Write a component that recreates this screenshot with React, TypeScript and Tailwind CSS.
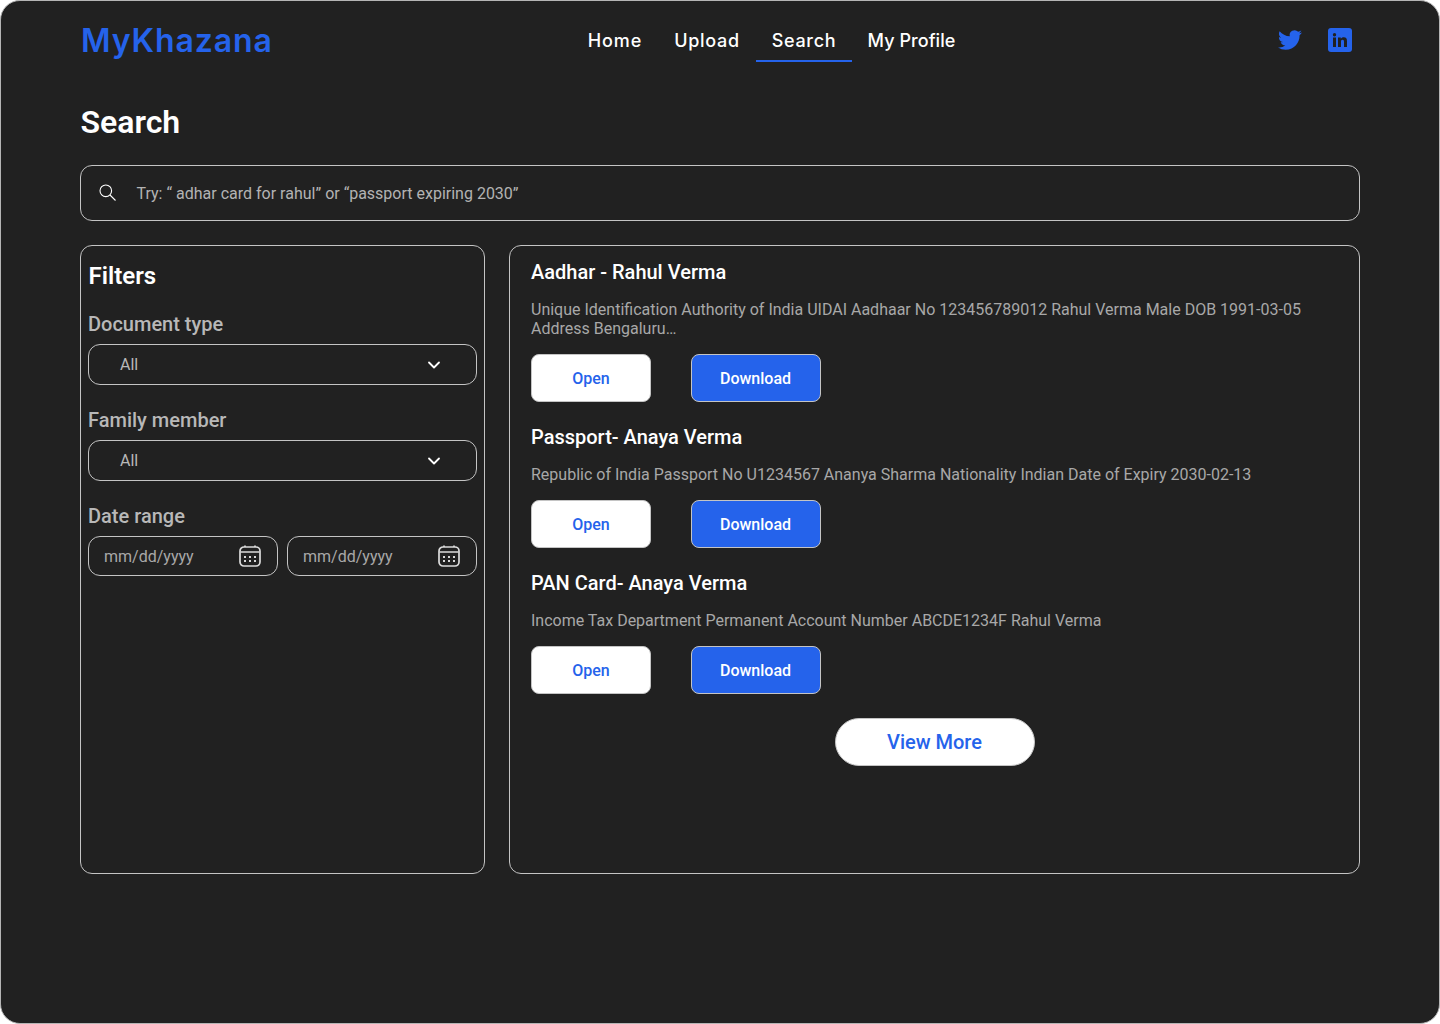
import { ChevronDown } from "lucide-react";

const results = [
  {
    title: "Aadhar - Rahul Verma",
    text: "Unique Identification Authority of India UIDAI Aadhaar No 123456789012 Rahul Verma Male DOB 1991-03-05 Address Bengaluru…",
  },
  {
    title: "Passport- Anaya Verma",
    text: "Republic of India Passport No U1234567 Ananya Sharma Nationality Indian Date of Expiry 2030-02-13",
  },
  {
    title: "PAN Card- Anaya Verma",
    text: "Income Tax Department Permanent Account Number ABCDE1234F Rahul Verma",
  },
];

function CalendarIcon() {
  return (
    <svg width="24" height="24" viewBox="0 0 24 24" fill="none" stroke="#dcdcdc" strokeWidth="1.7">
      <rect x="2" y="3" width="20" height="19" rx="4" />
      <path d="M2.500 8h19M7 1.500v1.500M17 1.500v1.500" />
      <path
        d="M6 12h2v2h-2zM11 12h2v2h-2zM16 12h2v2h-2zM6 16h2v2h-2zM11 16h2v2h-2zM16 16h2v2h-2z"
        fill="#d8d8d8"
        stroke="none"
      />
    </svg>
  );
}

function FilterSelect({ label }: { label: string }) {
  return (
    <div>
      <div className="text-[20px] leading-[24px] font-medium text-[#b8b8b8]">{label}</div>
      <div className="mt-2 h-[41px] flex items-center justify-between rounded-xl border border-[#c4c4c4] pl-[31px] pr-[32px] text-[16px] text-[#b8b8b8]">
        <span>All</span>
        <ChevronDown size={20} strokeWidth={2.2} className="text-white" />
      </div>
    </div>
  );
}

function DateInput() {
  return (
    <div className="flex-1 h-10 flex items-center justify-between rounded-xl border border-[#c4c4c4] pl-[15px] pr-[15px] text-[16px] text-[#a8a8a8]">
      <span className="pt-px">mm/dd/yyyy</span>
      <CalendarIcon />
    </div>
  );
}

export default function App() {
  return (
    <div className="w-[1440px] h-[1024px] bg-white antialiased" style={{ fontFamily: "Roboto, sans-serif" }}>
      <div className="h-full rounded-[20px] border border-[#b5b5b5] bg-[#212121] px-[79px]">
        <header className="relative h-[61px] flex items-center justify-between pt-[16px]">
          <div className="ml-px pt-[2px] text-[32px] font-semibold leading-none text-[#2563eb] font-['Inter',sans-serif] tracking-[0.9px]">
            MyKhazana
          </div>
          <nav className="absolute left-[492px] top-0 h-[61px] flex text-[18px] font-[450] text-white font-['Inter',sans-serif]">
            <a className="w-[86px] pt-[19px] flex items-center justify-center border-b-2 border-transparent tracking-[0.9px]">Home</a>
            <a className="w-[98px] pt-[19px] flex items-center justify-center border-b-2 border-transparent tracking-[0.7px]">Upload</a>
            <a className="w-[96px] pt-[19px] flex items-center justify-center border-b-2 border-[#2563eb] tracking-[0.7px]">Search</a>
            <a className="w-[119px] pt-[19px] flex items-center justify-center border-b-2 border-transparent tracking-[0.05px]">My Profile</a>
          </nav>
          <div className="flex items-center gap-[26px] pr-[8px]">
            <svg width="24" height="24" viewBox="0 0 24 24" fill="#2563eb">
              <path d="M23.95 4.57a10 10 0 0 1-2.82.77 4.96 4.96 0 0 0 2.16-2.72c-.95.55-2 .96-3.12 1.19a4.92 4.92 0 0 0-8.38 4.48C7.69 8.1 4.07 6.13 1.64 3.16a4.82 4.82 0 0 0-.67 2.48c0 1.71.87 3.21 2.19 4.1a4.9 4.9 0 0 1-2.23-.62v.06a4.92 4.92 0 0 0 3.95 4.83 5 5 0 0 1-2.21.08 4.94 4.94 0 0 0 4.6 3.42A9.87 9.87 0 0 1 0 19.54a14 14 0 0 0 7.56 2.21c9.05 0 14-7.5 14-13.98 0-.21 0-.42-.02-.63a9.94 9.94 0 0 0 2.41-2.57z" />
            </svg>
            <svg width="24" height="24" viewBox="0 0 24 24">
              <rect width="24" height="24" rx="3" fill="#2563eb" />
              <path d="M5 9.500h3V19H5zM6.500 5a1.700 1.700 0 1 1 0 3.400 1.700 1.700 0 0 1 0-3.400zM10 9.500h2.800v1.300c.5-.9 1.600-1.500 2.900-1.500 2.600 0 3.300 1.600 3.300 4V19h-3v-5c0-1.300-.3-2.200-1.500-2.200S13 12.700 13 14v5h-3z" fill="#212121" />
            </svg>
          </div>
        </header>

        <h1 className="mt-[41px] ml-[0.5px] text-[32px] leading-[38px] font-semibold text-white">Search</h1>

        <div className="mt-[24px] h-[56px] flex items-center rounded-xl border border-[#c4c4c4] pl-[17px] text-[16px] text-[#b3b3b3]">
          <svg width="20" height="20" viewBox="0 0 20 20" fill="none" stroke="#ffffff" strokeWidth="1.1">
            <circle cx="7.800" cy="7.800" r="5.800" />
            <path d="M12 12l5.500 5.500" />
          </svg>
          <span className="ml-[18.5px] pt-[2px]">Try: “ adhar card for rahul” or “passport expiring 2030”</span>
        </div>

        <div className="mt-6 flex gap-6">
          <aside className="w-[405px] h-[629px] rounded-xl border border-[#c4c4c4] px-[7px]">
            <h2 className="mt-[16px] ml-[0.5px] text-[24px] leading-[28px] font-semibold text-white">Filters</h2>
            <div className="mt-[22px] flex flex-col gap-[23px]">
              <FilterSelect label="Document type" />
              <FilterSelect label="Family member" />
              <div>
                <div className="text-[20px] leading-[24px] font-medium text-[#b8b8b8]">Date range</div>
                <div className="mt-2 flex gap-[9px]">
                  <DateInput />
                  <DateInput />
                </div>
              </div>
            </div>
          </aside>

          <main className="flex-1 h-[629px] rounded-xl border border-[#c4c4c4] px-[21px] pt-[14px]">
            {results.map((r) => (
              <section key={r.title} className="mb-[23px]">
                <h3 className="text-[20px] leading-[24px] font-medium text-white">{r.title}</h3>
                <p className="mt-[16px] w-[790px] text-[16px] leading-[19px] text-[#a8a8a8]">{r.text}</p>
                <div className="mt-[16px] flex gap-10">
                  <button className="w-[120px] h-12 pt-[2px] rounded-lg bg-white border border-[#c4c4c4] text-[16px] font-medium text-[#2563eb]">
                    Open
                  </button>
                  <button className="w-[130px] h-12 pt-[2px] pr-px rounded-lg bg-[#2563eb] border border-[#c4c4c4] text-[16px] font-medium text-white">
                    Download
                  </button>
                </div>
              </section>
            ))}
            <div className="flex justify-center pt-px">
              <button className="w-[200px] h-12 rounded-[24px] bg-white border border-[#c4c4c4] text-[20px] font-medium text-[#2563eb]">
                View More
              </button>
            </div>
          </main>
        </div>
      </div>
    </div>
  );
}
